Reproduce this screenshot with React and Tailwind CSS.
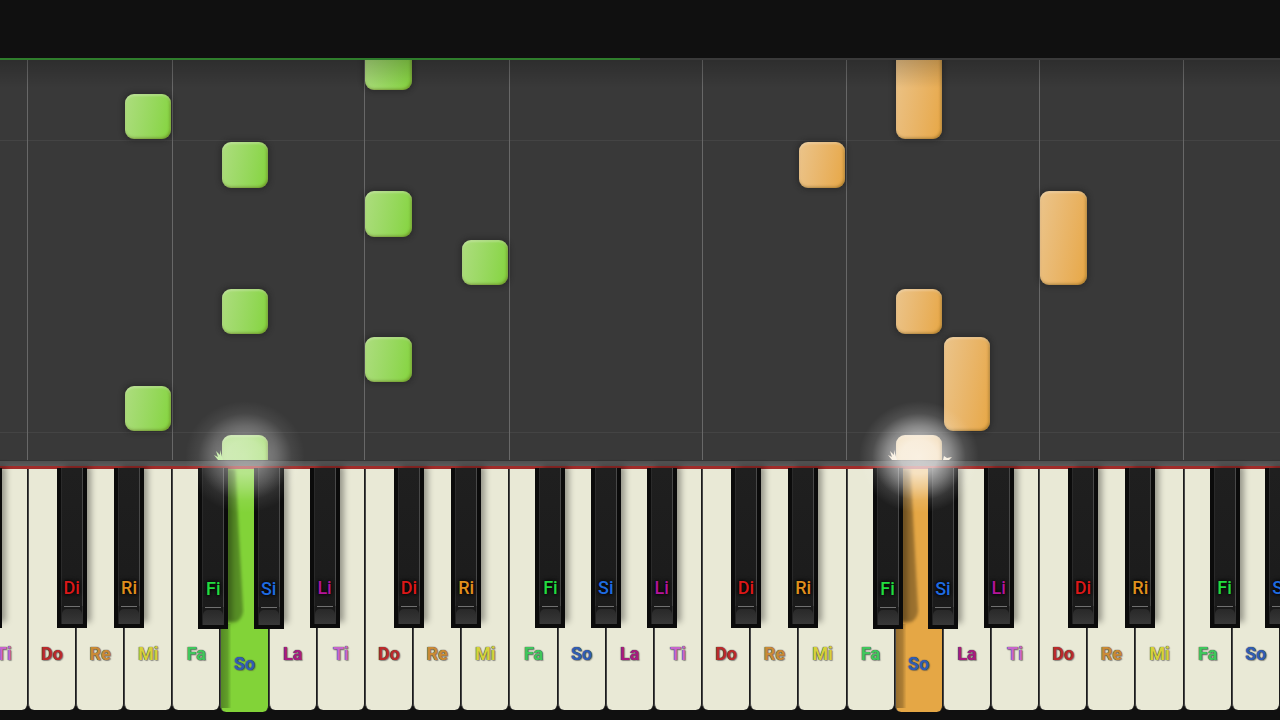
import React from "react";

const OCTAVE = [
  { name: "Do", color: "text-[#bb2a2a]", line: true, sharp: { name: "Di", color: "text-[#dc1818]", left: "left-[60%]" } },
  { name: "Re", color: "text-[#c98a35]", sharp: { name: "Ri", color: "text-[#e0901c]", left: "left-[79%]" } },
  { name: "Mi", color: "text-[#d6d23a]" },
  { name: "Fa", color: "text-[#3fc75c]", line: true, sharp: { name: "Fi", color: "text-[#22dc40]", left: "left-[54%]" } },
  { name: "So", color: "text-[#2f5db4]", sharp: { name: "Si", color: "text-[#1f6be0]", left: "left-[69%]" } },
  { name: "La", color: "text-[#a81b80]", sharp: { name: "Li", color: "text-[#b5149a]", left: "left-[85%]" } },
  { name: "Ti", color: "text-[#c765cc]" },
];

// 28 white keys, from La to So; the first lies outside the visible range
const KEYS = Array.from({ length: 28 }, (_, i) => ({ ...OCTAVE[(i + 5) % 7], index: i }));
const PRESSED = { 6: "green", 20: "orange" };

// bottom: distance above the strike line, in pixels
const NOTES = [
  { lane: 4, hand: "green", bottom: 321, height: 45 },
  { lane: 4, hand: "green", bottom: 29, height: 45 },
  { lane: 6, hand: "green", bottom: 272, height: 46 },
  { lane: 6, hand: "green", bottom: 126, height: 45 },
  { lane: 6, hand: "green", bottom: -20, height: 45, lit: true },
  { lane: 9, hand: "green", bottom: 370, height: 45 },
  { lane: 9, hand: "green", bottom: 223, height: 46 },
  { lane: 9, hand: "green", bottom: 78, height: 45 },
  { lane: 11, hand: "green", bottom: 175, height: 45 },
  { lane: 18, hand: "orange", bottom: 272, height: 46 },
  { lane: 20, hand: "orange", bottom: 321, height: 94 },
  { lane: 20, hand: "orange", bottom: 126, height: 45 },
  { lane: 20, hand: "orange", bottom: -20, height: 45, lit: true },
  { lane: 21, hand: "orange", bottom: 29, height: 94 },
  { lane: 23, hand: "orange", bottom: 175, height: 94 },
];

const NOTE_STYLE = {
  green: "bg-linear-100 from-[#addd7e] to-[#84d43c]",
  orange: "bg-linear-100 from-[#ebc48a] to-[#e7a744]",
};
const LIT_STYLE = {
  green: "bg-linear-to-r from-[#b0de85] to-[#98d85c]",
  orange: "bg-linear-to-r from-[#ecd0a0] to-[#ebc48a]",
};

function Note({ note }) {
  const fill = note.lit ? LIT_STYLE[note.hand] : NOTE_STYLE[note.hand];
  return (
    <div
      className={`absolute inset-x-px rounded-[9px] shadow-[0_0_5px_2px_rgba(25,25,25,0.4),inset_0_2px_2px_rgba(255,255,255,0.25),inset_-1px_-1px_3px_rgba(70,50,0,0.4)] ${fill}`}
      style={{ bottom: note.bottom, height: note.height }}
    />
  );
}

function Roll() {
  return (
    <section
      aria-label="Falling notes"
      className="relative flex min-h-[400px] flex-1 overflow-hidden bg-[#393939]"
    >
      <div className="absolute inset-0 flex flex-col justify-end">
        <div className="h-[292px] border-t border-[#444]" />
        <div className="h-7 border-t border-[#444]" />
      </div>
      <div className="relative -ml-[5.35%] flex flex-1">
        {KEYS.map((key) => (
          <div key={key.index} className={`flex-1 ${key.line ? "border-l border-[#686868]" : ""}`}>
            <div className={`relative h-full ${key.line ? "-ml-px" : ""}`}>
              {NOTES.filter((n) => n.lane === key.index).map((n) => (
                <Note key={n.bottom} note={n} />
              ))}
            </div>
          </div>
        ))}
      </div>
      <div className="absolute inset-x-0 top-0 h-7 bg-linear-to-b from-black/20 to-transparent" />
    </section>
  );
}

function BlackKey({ sharp, low, hidden }) {
  return (
    <button
      type="button"
      aria-label={sharp.name}
      className={`absolute top-0 z-10 -mt-px flex w-[30px] flex-col bg-[#0b0b0b] px-1 pb-1 shadow-[6px_-4px_6px_-2px_rgba(0,0,0,0.35)] ${sharp.left} ${low ? "h-[161px]" : "h-[160px]"}`}
    >
      <span className="flex w-full flex-1 items-end justify-center border-r border-l border-r-[#484848] border-l-[#2a2a2a] bg-linear-to-b from-[#1f1f1f] to-[#1b1b1b] pb-2">
        {!hidden && (
          <span className={`text-[18px] leading-5 font-medium [text-shadow:0_0_3px_#000,0_0_5px_#000] ${sharp.color}`}>
            {sharp.name}
          </span>
        )}
      </span>
      <span className="flex h-[18px] w-full flex-col border-r border-l border-r-[#333] border-l-[#222] bg-[#191919]">
        <span className="mx-auto h-px w-4 bg-[#707070]" />
        <span className="mt-[2px] w-full flex-1 rounded-t-[5px] bg-linear-to-b from-[#292929] to-[#383838]" />
      </span>
    </button>
  );
}

function PressedShade() {
  return (
    <svg className="absolute inset-0 h-full w-full" viewBox="0 0 48 243" preserveAspectRatio="none" aria-hidden="true">
      <defs>
        <linearGradient id="edge" x1="0" x2="1">
          <stop offset="0" stopColor="#000" stopOpacity="0.35" />
          <stop offset="0.6" stopColor="#000" stopOpacity="0.25" />
          <stop offset="1" stopColor="#000" stopOpacity="0" />
        </linearGradient>
        <filter id="soften">
          <feGaussianBlur stdDeviation="1.5" />
        </filter>
      </defs>
      <path d="M6 0H15L23 142Q22 150 16 153H6Z" fill="#000" fillOpacity="0.32" filter="url(#soften)" />
      <rect x="0" y="155" width="11" height="84" fill="url(#edge)" />
    </svg>
  );
}

function StrikeLight({ tone }) {
  const green = tone === "green";
  const color = green ? "#b5e98c" : "#f3e3c8";
  const id = `light-${tone}`;
  const peak = green ? 0.45 : 0.72;
  return (
    <svg
      className="pointer-events-none absolute bottom-full left-1/2 z-20 -mb-[58px] h-[136px] w-[136px] -translate-x-1/2"
      viewBox="0 0 136 136"
      aria-hidden="true"
    >
      <defs>
        <radialGradient id={id}>
          <stop offset="0" stopColor="#fff" stopOpacity={peak} />
          <stop offset="0.3" stopColor="#fff" stopOpacity={peak * 0.92} />
          <stop offset="0.55" stopColor="#fff" stopOpacity={peak * 0.55} />
          <stop offset="0.78" stopColor="#fff" stopOpacity={peak * 0.15} />
          <stop offset="1" stopColor="#fff" stopOpacity="0" />
        </radialGradient>
      </defs>
      <path d="M37 64l4 2-2-6 4 4v-5l3 10h-5z" fill={color} />
      {!green && <path d="M92 69l1-4 3 2 5-1-3 3z" fill={color} />}
      <ellipse cx="68" cy="66" rx="60" ry="56" fill={`url(#${id})`} />
    </svg>
  );
}

function Key({ item }) {
  const tone = PRESSED[item.index];
  const face = tone === "green" ? "bg-[#82d338]" : tone === "orange" ? "bg-[#e5a745]" : "bg-[#e9e9d6]";
  const lowSharp = [5, 6, 19, 20].includes(item.index);
  const hidden = item.index === 0;
  return (
    <div className="relative flex-1">
      <button
        type="button"
        aria-pressed={Boolean(tone)}
        aria-label={item.name}
        className={`relative flex w-full items-end justify-center overflow-hidden rounded-b-md border-r border-l border-r-[#1c1c1c] border-l-[#484848] ${face} ${tone ? "h-[243px] pb-[38px]" : "h-[241px] pb-[46px]"}`}
      >
        {tone && <PressedShade />}
        {!hidden && (
          <span
            className={`relative text-[18px] leading-5 font-bold [text-shadow:0_0_1px_#444,0_0_1px_#555,1px_1px_1px_rgba(80,80,80,0.5)] ${item.color}`}
          >
            {item.name}
          </span>
        )}
      </button>
      {item.sharp && <BlackKey sharp={item.sharp} low={lowSharp} hidden={hidden} />}
      {tone && <StrikeLight tone={tone} />}
    </div>
  );
}

export default function App() {
  return (
    <main className="flex min-h-screen flex-col overflow-x-clip bg-[#101010] font-['Roboto','Open_Sans',sans-serif]">
      <header className="flex h-[60px] shrink-0 flex-col justify-end bg-[#101010]">
        <div className="h-[2px] bg-[#3a3a3a]">
          <div className="h-full w-1/2 bg-[#2f7d2c]" />
        </div>
      </header>
      <Roll />
      <section aria-label="Keyboard" className="relative overflow-x-clip bg-[#101010]">
        <div className="h-[6px] border-t border-[#333] bg-linear-to-b from-[#505050] to-[#5a5a5a]" />
        <div className="h-[3px] bg-[#a02c2a]" />
        <div className="-ml-[5.35%] flex h-[251px] bg-[#101010]">
          {KEYS.map((key) => (
            <Key key={key.index} item={key} />
          ))}
        </div>
      </section>
    </main>
  );
}
